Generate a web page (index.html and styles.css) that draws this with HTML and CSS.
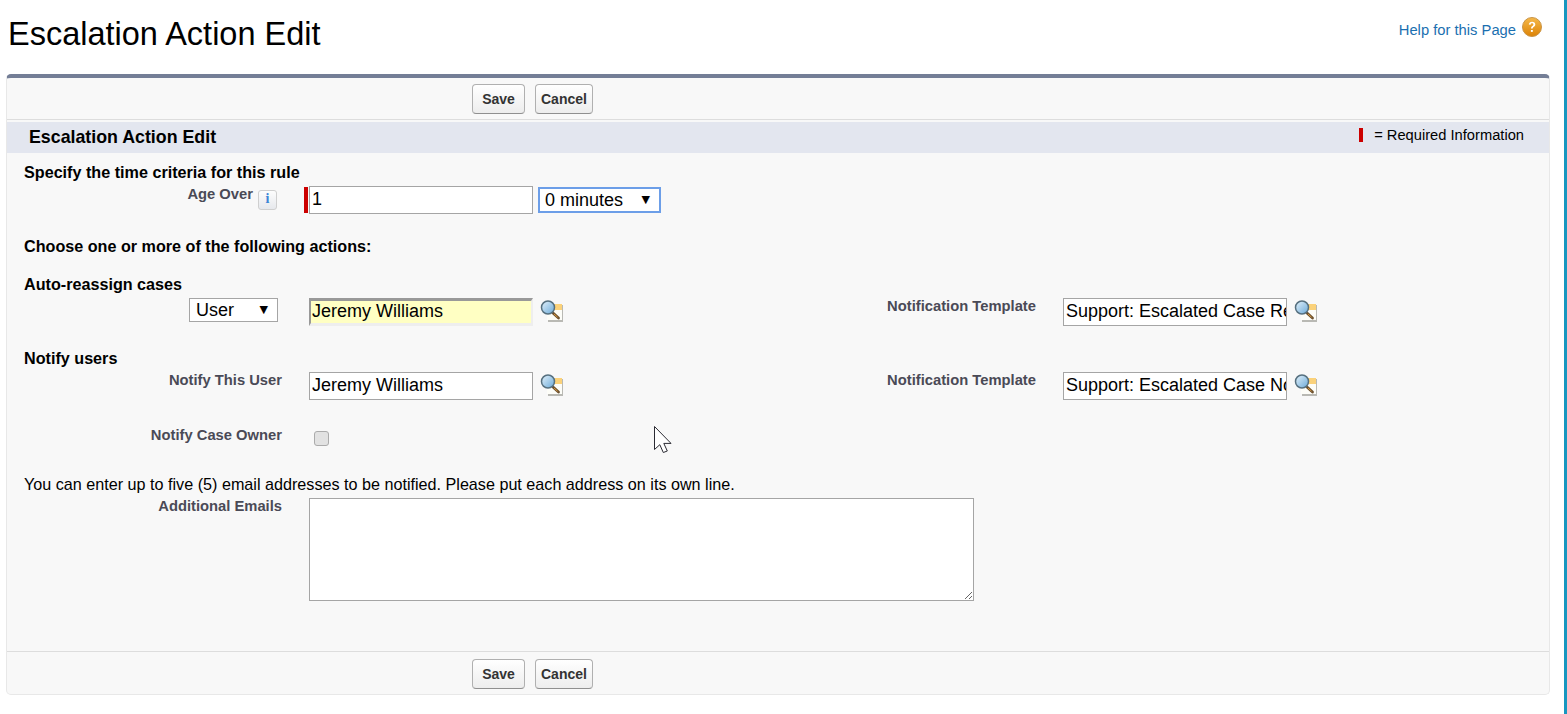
FILE: index.html
```html
<!DOCTYPE html>
<html lang="en">
<head>
  <meta charset="UTF-8">
  <title>Escalation Action Edit</title>
  <link rel="stylesheet" href="styles.css">
</head>
<body>
  <!-- Page title and help link -->
  <header class="page-header">
    <h1>Escalation Action Edit</h1>
    <a class="help-link" href="#">
      <span>Help for this Page</span>
      <svg class="help-icon" width="20" height="20" viewBox="0 0 20 20">
        <defs>
          <linearGradient id="help-fill" x1="0" y1="0" x2="0" y2="1">
            <stop offset="0" stop-color="#f5b94a"/>
            <stop offset="1" stop-color="#dc8206"/>
          </linearGradient>
        </defs>
        <circle cx="10" cy="10" r="9.5" fill="url(#help-fill)" stroke="#c99447" stroke-width="1"/>
        <path d="M6.8 7.6c.2-1.9 1.5-2.9 3.3-2.9 1.9 0 3.2 1.1 3.2 2.7 0 1.3-.8 1.9-1.6 2.5-.7.5-1 .8-1 1.7H9c0-1.5.5-2.1 1.3-2.7.7-.5 1.1-.8 1.1-1.5 0-.7-.5-1.1-1.3-1.1-.9 0-1.4.5-1.500 1.4z" fill="#fff"/>
        <rect x="8.9" y="13" width="1.9" height="1.9" fill="#fff"/>
      </svg>
    </a>
  </header>

  <main class="panel">
    <div class="button-row button-row-top">
      <button class="btn" type="button">Save</button>
      <button class="btn" type="button">Cancel</button>
    </div>

    <div class="section-header">
      <h2>Escalation Action Edit</h2>
      <div class="required-legend"><span class="legend-bar"></span>= Required Information</div>
    </div>

    <div class="panel-body">
      <h3 class="group-title group-first">Specify the time criteria for this rule</h3>
      <div class="field-row">
        <div class="field-label label-with-info">
          <span>Age Over</span>
          <span class="info-icon">i</span>
        </div>
        <div class="field-control">
          <span class="required-bar"></span>
          <input class="text-input" type="text" value="1">
          <div class="select-box select-focus">0 minutes</div>
        </div>
      </div>

      <h3 class="group-title group-choose">Choose one or more of the following actions:</h3>

      <h3 class="group-title group-reassign">Auto-reassign cases</h3>
      <div class="field-row">
        <div class="field-label">
          <div class="select-box select-user">User</div>
        </div>
        <div class="field-control">
          <input class="text-input input-highlight" type="text" value="Jeremy Williams">
          <svg class="lookup-icon" width="23" height="23" viewBox="0 0 23 23"><use href="#lookup"/></svg>
        </div>
        <div class="field-label">Notification Template</div>
        <div class="field-control">
          <input class="text-input" type="text" value="Support: Escalated Case Reassignment">
          <svg class="lookup-icon" width="23" height="23" viewBox="0 0 23 23"><use href="#lookup"/></svg>
        </div>
      </div>

      <h3 class="group-title group-notify">Notify users</h3>
      <div class="field-row">
        <div class="field-label">Notify This User</div>
        <div class="field-control">
          <input class="text-input" type="text" value="Jeremy Williams">
          <svg class="lookup-icon" width="23" height="23" viewBox="0 0 23 23"><use href="#lookup"/></svg>
        </div>
        <div class="field-label">Notification Template</div>
        <div class="field-control">
          <input class="text-input" type="text" value="Support: Escalated Case Notification">
          <svg class="lookup-icon" width="23" height="23" viewBox="0 0 23 23"><use href="#lookup"/></svg>
        </div>
      </div>

      <div class="field-row row-owner">
        <div class="field-label">Notify Case Owner</div>
        <div class="field-control">
          <span class="checkbox"></span>
        </div>
      </div>

      <p class="help-text">You can enter up to five (5) email addresses to be notified. Please put each address on its own line.</p>
      <div class="field-row">
        <div class="field-label">Additional Emails</div>
        <div class="field-control control-wide">
          <textarea class="email-input"></textarea>
        </div>
      </div>
    </div>

    <div class="button-row button-row-bottom">
      <button class="btn" type="button">Save</button>
      <button class="btn" type="button">Cancel</button>
    </div>
  </main>

  <div class="edge-stripe"></div>

  <!-- Mouse pointer caught in the screenshot -->
  <svg class="pointer" width="20" height="30" viewBox="0 0 20 30">
    <path d="M1.5 1.5v23l5.300-4.800 3.500 7.800 4-1.500-3.500-7.600h7.200z" fill="#fff" stroke="#2b2b33" stroke-width="1"/>
  </svg>

  <!-- Shared lookup icon -->
  <svg class="icon-defs" width="0" height="0">
    <defs>
      <linearGradient id="lens-fill" x1="0" y1="0" x2="1" y2="1">
        <stop offset="0" stop-color="#e4f2fb"/>
        <stop offset="1" stop-color="#6aa9d8"/>
      </linearGradient>
      <g id="lookup">
        <rect x="8" y="5" width="15" height="17" fill="#b9b9b4"/>
        <rect x="7" y="4" width="15" height="16" fill="#fdfdf8"/>
        <rect x="14" y="4" width="8" height="6" fill="#fbd27a"/>
        <path d="M13 13l5.500 5" stroke="#6e5230" stroke-width="2.800" stroke-linecap="round"/>
        <path d="M14 14l3.500 3.200" stroke="#d99a3c" stroke-width="1"/>
        <circle cx="8" cy="7.500" r="6.500" fill="url(#lens-fill)" stroke="#56707f" stroke-width="1.500"/>
      </g>
    </defs>
  </svg>
</body>
</html>
```

FILE: styles.css
```css
body {
  margin: 0;
  background-color: #FFFFFF;
  color: #000000;
  font-family: 'Liberation Sans', Arial, sans-serif;
  font-size: 14px;
}

/* Page header */
.page-header {
  display: flex;
  justify-content: space-between;
  height: 74px;
  margin: 0 25px 0 8px;
}

h1 {
  margin: 15px 0 0;
  font-size: 32.500px;
  font-weight: normal;
  line-height: 38px;
}

.help-link {
  display: flex;
  align-items: flex-start;
  gap: 6px;
  margin-top: 16px;
  color: #1B6FB0;
  font-size: 14.750px;
  line-height: 28px;
  text-decoration: none;
}

.help-icon {
  margin-top: 1px;
}

/* Panel */
.panel {
  margin: 0 17px 0 6px;
  height: 621px;
  box-sizing: border-box;
  background-color: #F8F8F8;
  border: 1px solid #E8E8E8;
  border-top: 4px solid #747E96;
  border-radius: 5px;
}

.button-row {
  display: flex;
  gap: 10px;
  padding-left: 465px;
}

.button-row-top {
  height: 42px;
  padding-top: 6px;
  box-sizing: border-box;
  border-bottom: 1px solid #DDDDDD;
}

.button-row-bottom {
  height: 42px;
  padding-top: 7px;
  box-sizing: border-box;
  border-top: 1px solid #DDDDDD;
}

.btn {
  height: 30px;
  padding: 0 5px;
  min-width: 53px;
  background: linear-gradient(#FFFFFF, #EDEDED);
  border: 1px solid #B0B0B0;
  border-bottom-color: #8F8F8F;
  border-radius: 4px;
  color: #333333;
  font-family: inherit;
  font-size: 14px;
  font-weight: bold;
}

.section-header {
  display: flex;
  justify-content: space-between;
  align-items: center;
  height: 31px;
  margin-top: 2px;
  padding: 0 25px 0 22px;
  background-color: #E3E6EF;
}

h2 {
  margin: 0;
  font-size: 17.800px;
}

.required-legend {
  display: flex;
  align-items: center;
  margin-top: -5px;
  font-size: 14.700px;
}

.legend-bar {
  width: 4px;
  height: 14px;
  margin-right: 11px;
  background-color: #CC0000;
}

/* Form */
.panel-body {
  height: 498px;
  box-sizing: border-box;
}

.group-title {
  height: 18px;
  margin: 0;
  padding-left: 17px;
  font-size: 16.170px;
  line-height: 18px;
}

.group-first {
  padding-top: 10px;
  box-sizing: content-box;
}

.group-choose {
  margin-top: 23px;
}

.group-reassign {
  margin-top: 20px;
}

.group-notify {
  margin-top: 23px;
}

.field-row {
  display: grid;
  grid-template-columns: 275px 605px 149px 1fr;
  margin-top: 5px;
}

.field-label {
  display: flex;
  justify-content: flex-end;
  color: #4A4A56;
  font-size: 14.750px;
  font-weight: bold;
  line-height: 16px;
}

.label-with-info {
  gap: 5px;
  margin-right: 5px;
}

.info-icon {
  width: 17px;
  height: 18px;
  margin-top: 4px;
  background: linear-gradient(#FDFDFD, #E6E8EC);
  border: 1px solid #CFCFCF;
  border-radius: 3px;
  color: #3D85D6;
  font-family: 'Liberation Serif', serif;
  font-size: 14px;
  text-align: center;
}

.field-control {
  display: flex;
  align-items: flex-start;
  padding-left: 27px;
}

.required-bar {
  width: 4px;
  height: 26px;
  margin: 1px 1px 0 -5px;
  background-color: #CC0000;
}

.text-input {
  width: 224px;
  height: 28px;
  box-sizing: border-box;
  padding: 0 0 2px 2px;
  background-color: #FFFFFF;
  border: 1px solid #A5A5A5;
  border-radius: 0;
  color: #000000;
  font-family: inherit;
  font-size: 18px;
}

.input-highlight {
  padding: 0 0 2px 1px;
  background-color: #FFFFC3;
  border-width: 3px 2px;
  border-style: solid;
  border-color: #999999 #EEEEEE #EEEEEE #999999;
}

.select-box {
  position: relative;
  box-sizing: border-box;
  background-color: #FFFFFF;
  border: 1px solid #A5A5A5;
  color: #000000;
  font-size: 18px;
  font-weight: normal;
  text-align: left;
}

/* Dropdown arrow */
.select-box::after {
  content: "▼";
  position: absolute;
  top: 50%;
  right: 9px;
  transform: translateY(-50%);
  font-family: 'DejaVu Sans', sans-serif;
  font-size: 11px;
  line-height: 12px;
}

.select-focus {
  width: 123px;
  height: 26px;
  margin: 1px 0 0 5px;
  padding-left: 5px;
  border: 2px solid #6C9EE8;
  line-height: 22px;
}

.select-user {
  width: 89px;
  height: 24px;
  margin-right: 4px;
  padding-left: 6px;
  line-height: 22px;
}

.lookup-icon {
  margin: 2px 0 0 7px;
}

.row-owner {
  margin-top: 27px;
}

.checkbox {
  width: 15px;
  height: 15px;
  margin: 4px 0 0 5px;
  background-color: #E2E2E2;
  border: 1px solid #ABABAB;
  border-radius: 3px;
  box-sizing: border-box;
}

.help-text {
  height: 18px;
  margin: 29px 0 0;
  padding-left: 17px;
  font-size: 16.160px;
  line-height: 18px;
}

.email-input {
  display: block;
  width: 665px;
  height: 103px;
  box-sizing: border-box;
  margin: 0;
  background-color: #FFFFFF;
  border: 1px solid #A5A5A5;
  border-radius: 0;
}

.control-wide {
  grid-column: span 3;
}

/* Things over the page */
.edge-stripe {
  position: fixed;
  top: 0;
  right: 0;
  bottom: 0;
  width: 3px;
  background-color: #1797C0;
}

.pointer {
  position: absolute;
  left: 653px;
  top: 425px;
}

.icon-defs {
  position: absolute;
}
```
